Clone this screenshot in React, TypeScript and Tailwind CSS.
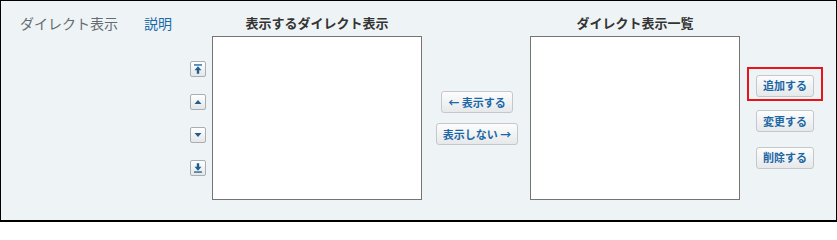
import React from 'react';

const font = '"Noto Sans CJK JP", "Noto Sans", sans-serif';

function Btn({ children }: { children: React.ReactNode }) {
  return (
    <button
      className="h-[22px] px-[6px] rounded-[3px] border border-[#c4c8cc] bg-gradient-to-b from-[#fdfdfd] to-[#e6e8ea] text-[11px] font-bold leading-none text-[#1b67a6] whitespace-nowrap"
      style={{ fontFamily: font }}
    >
      {children}
    </button>
  );
}

function IconBtn({ kind }: { kind: 'top' | 'up' | 'down' | 'bottom' }) {
  return (
    <button className="w-[16px] h-[16px] rounded-[2px] border border-[#a9aeb3] bg-gradient-to-b from-white to-[#e4e6e8] flex items-center justify-center">
      <svg width="10" height="10" viewBox="0 0 10 10" fill="#1d5f92">
        {kind === 'top' && (
          <>
            <rect x="1" y="0.3" width="8" height="1.3" />
            <path d="M5 2.3 L8.5 6.2 H6.2 V9.7 H3.8 V6.2 H1.5 Z" />
          </>
        )}
        {kind === 'up' && <path d="M5 3 L8.5 7 H1.5 Z" />}
        {kind === 'down' && <path d="M1.5 3 H8.5 L5 7 Z" />}
        {kind === 'bottom' && (
          <>
            <path d="M3.8 0.3 H6.2 V3.8 H8.5 L5 7.7 L1.5 3.8 H3.8 Z" />
            <rect x="1" y="8.4" width="8" height="1.3" />
          </>
        )}
      </svg>
    </button>
  );
}

export default function App() {
  return (
    <div
      className="w-[837px] h-[222px] border border-b-2 border-black bg-[#eef3f6]"
      style={{ fontFamily: font }}
    >
      <div className="flex items-start pl-[19px] pt-[12px]">
        {/* label */}
        <div className="w-[170px] flex gap-[26px] text-[14px] leading-[20px]">
          <span className="text-[#666b70]">ダイレクト表示</span>
          <span className="text-[#1b6aa8]">説明</span>
        </div>

        {/* order buttons */}
        <div className="mt-[23px] h-[164px] flex flex-col justify-center gap-[17px]">
          <IconBtn kind="top" />
          <IconBtn kind="up" />
          <IconBtn kind="down" />
          <IconBtn kind="bottom" />
        </div>

        {/* shown list */}
        <div className="ml-[6px] w-[210px]">
          <div className="h-[20px] text-center text-[13px] font-bold leading-[20px] text-[#333]">
            表示するダイレクト表示
          </div>
          <div className="mt-[3px] h-[164px] border border-[#747474] bg-white" />
        </div>

        {/* move buttons */}
        <div className="w-[108px] mt-[23px] h-[164px] flex flex-col items-center justify-center gap-[10px] pl-[2px]">
          <Btn>← 表示する</Btn>
          <Btn>表示しない →</Btn>
        </div>

        {/* all list */}
        <div className="w-[210px]">
          <div className="h-[20px] text-center text-[13px] font-bold leading-[20px] text-[#333]">
            ダイレクト表示一覧
          </div>
          <div className="mt-[3px] h-[164px] border border-[#747474] bg-white" />
        </div>

        {/* edit buttons */}
        <div className="ml-[7px] mt-[23px] h-[164px] flex flex-col items-center justify-center">
          <div className="border-2 border-[#e8141b] px-[7px] py-[2px]">
            <Btn>追加する</Btn>
          </div>
          <div className="mt-[6px]">
            <Btn>変更する</Btn>
          </div>
          <div className="mt-[11px]">
            <Btn>削除する</Btn>
          </div>
        </div>
      </div>
    </div>
  );
}
